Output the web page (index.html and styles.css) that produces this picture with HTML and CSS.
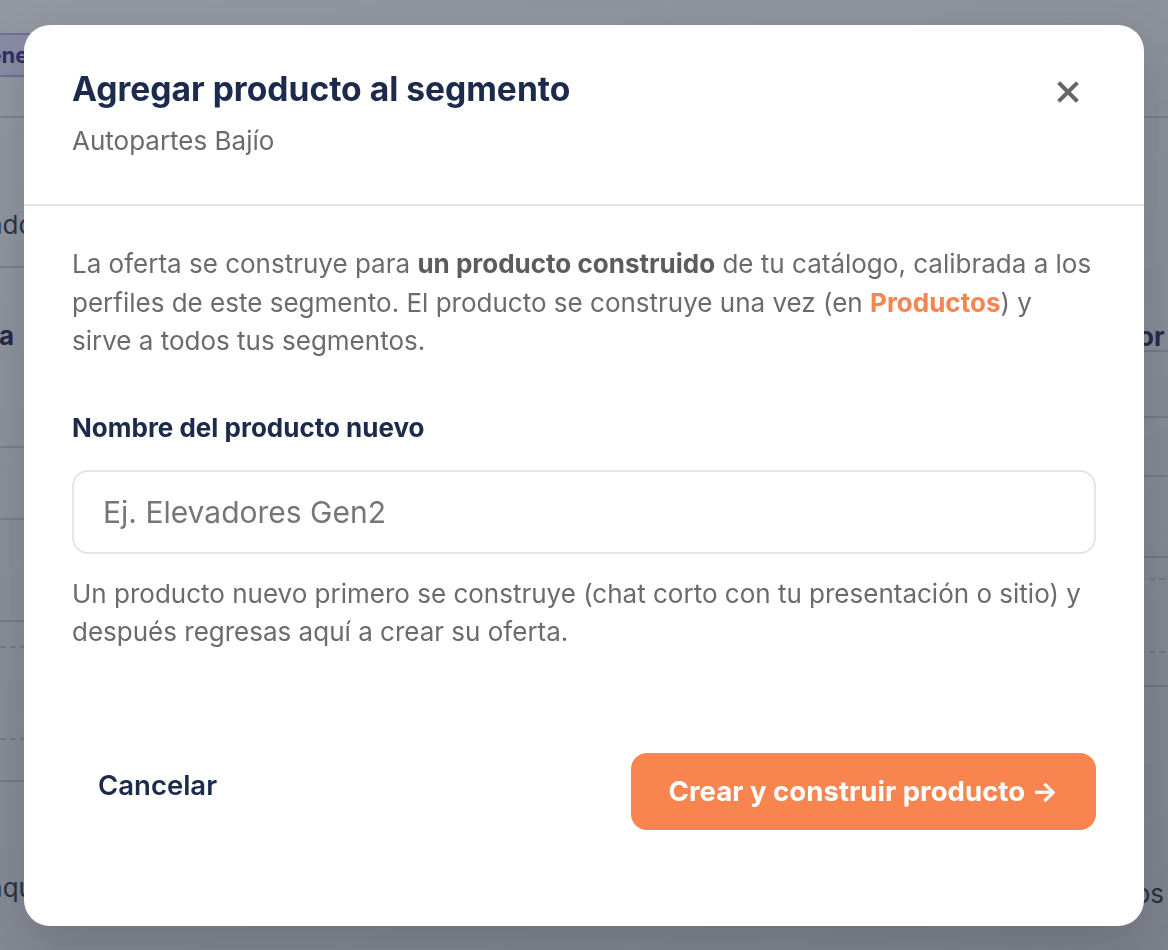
FILE: index.html
```html
<!DOCTYPE html>
<html lang="es">

<head>
    <meta charset="UTF-8">
    <meta name="viewport" content="width=device-width, initial-scale=1.0">
    <title>Agregar producto al segmento</title>
    <link rel="stylesheet" href="styles.css">
</head>

<body>

    <!-- pagina de fondo (queda detras del modal) -->
    <div class="fondo">
        <div class="columna columna-izq">
            <div class="fila alto-93 inicio"><span class="badge">Generado</span></div>
            <div class="fila alto-150 abajo"><span class="txt">Mercado</span></div>
            <div class="fila alto-180 medio"><span class="txt negrita corta">Oferta</span></div>
            <div class="fila alto-72"></div>
            <div class="fila alto-102"></div>
            <div class="fila alto-26 punteada"></div>
            <div class="fila alto-92 punteada"></div>
            <div class="fila alto-42"></div>
            <div class="fila alto-120 sin-borde"><span class="txt">aqu</span></div>
        </div>
        <div class="columna columna-der">
            <div class="fila alto-93"></div>
            <div class="fila alto-234 medio"><span class="txt negrita">Valor</span></div>
            <div class="fila alto-66"></div>
            <div class="fila alto-59"></div>
            <div class="fila alto-81"></div>
            <div class="fila alto-22 punteada"></div>
            <div class="fila alto-73 punteada"></div>
            <div class="fila alto-34"></div>
            <div class="fila alto-230 sin-borde"><span class="txt fin">todos</span></div>
        </div>
    </div>

    <div class="capa">
        <div class="modal">
            <div class="modal-cabeza">
                <div>
                    <h2 class="titulo">Agregar producto al segmento</h2>
                    <p class="subtitulo">Autopartes Bajío</p>
                </div>
                <button class="cerrar" aria-label="Cerrar">
                    <svg width="22" height="22" viewBox="0 0 22 22">
                        <path d="M3 3 L19 19 M19 3 L3 19" stroke="#666666" stroke-width="4" stroke-linecap="square" fill="none"/>
                    </svg>
                </button>
            </div>

            <div class="modal-cuerpo">
                <p class="texto">La oferta se construye para <b>un producto construido</b> de tu catálogo, calibrada a los perfiles de este segmento. El producto se construye una vez (en <span class="enlace">Productos</span>) y sirve a todos tus segmentos.</p>

                <label class="etiqueta" for="inpNombre">Nombre del producto nuevo</label>
                <input id="inpNombre" class="campo" type="text" placeholder="Ej. Elevadores Gen2">

                <p class="ayuda">Un producto nuevo primero se construye (chat corto con tu presentación o sitio) y después regresas aquí a crear su oferta.</p>
            </div>

            <div class="modal-pie">
                <button class="btn-cancelar">Cancelar</button>
                <button class="btn-crear">Crear y construir producto →</button>
            </div>
        </div>
    </div>

</body>

</html>
```

FILE: styles.css
```css
* {
    box-sizing: border-box;
}

body {
    margin: 0;
    font-family: Inter, "Noto Sans", sans-serif;
    background-color: #ffffff;
    overflow: hidden;
}

/* fondo */

.fondo {
    display: flex;
    justify-content: space-between;
    margin-left: -120px;
    margin-right: -140px;
    padding-top: 25px;
}

.columna-izq {
    width: 176px;
}

.columna-der {
    width: 220px;
}

.fila {
    display: flex;
    align-items: center;
    border-bottom: 2px solid #d6d8de;
}

.fila.sin-borde {
    border-bottom: none;
}

.fila.punteada {
    border-bottom: 2px dashed #d6d8de;
}

.fila.abajo {
    align-items: flex-end;
    padding-bottom: 26px;
}

.fila.medio {
    align-items: flex-start;
    padding-top: 52px;
}

.columna-izq .fila {
    justify-content: flex-end;
}

.columna-izq .fila.inicio {
    justify-content: flex-start;
}

.columna-der .fila {
    justify-content: flex-start;
}

.alto-22 { height: 22px; }
.alto-26 { height: 26px; }
.alto-34 { height: 34px; }
.alto-42 { height: 42px; }
.alto-59 { height: 59px; }
.alto-66 { height: 66px; }
.alto-72 { height: 72px; }
.alto-73 { height: 73px; }
.alto-81 { height: 81px; }
.alto-92 { height: 92px; }
.alto-93 { height: 93px; align-items: flex-start; padding-top: 8px; }
.alto-102 { height: 102px; }
.alto-120 { height: 120px; }
.alto-150 { height: 150px; }
.alto-180 { height: 180px; }
.alto-230 { height: 230px; }
.alto-234 { height: 234px; }

.columna-der .alto-234 {
    padding-top: 203px;
}

.columna-der .alto-230 {
    padding-top: 183px;
}

.columna-izq .alto-120 {
    align-items: flex-start;
    padding-top: 90px;
}

.badge {
    font-size: 22px;
    font-weight: 700;
    color: #3b2f8f;
    background-color: #ece9ff;
    border: 2px solid #b9b0f0;
    border-radius: 10px;
    padding: 7px 14px;
    margin-left: 76px;
    white-space: nowrap;
}

.txt {
    font-size: 26px;
    color: #333a44;
    margin-right: 22px;
    white-space: nowrap;
}

.txt.corta {
    margin-right: 42px;
}

.columna-der .txt {
    margin-right: 0;
    margin-left: 10px;
}

.columna-der .txt.fin {
    margin-left: 7px;
}

.txt.negrita {
    font-weight: 700;
    color: #1e2b4d;
}

/* capa oscura + modal */

.capa {
    position: fixed;
    top: 0;
    left: 0;
    right: 0;
    bottom: 0;
    background: linear-gradient(160deg, rgba(38, 48, 70, 0.5), rgba(38, 46, 64, 0.6));
    padding: 25px 24px 24px 24px;
    display: flex;
}

.modal {
    flex: 1;
    background-color: #ffffff;
    border-radius: 26px;
    display: flex;
    flex-direction: column;
    box-shadow: 0 20px 50px rgba(0, 0, 0, 0.15);
}

.modal-cabeza {
    display: flex;
    justify-content: space-between;
    align-items: flex-start;
    padding: 44px 48px 46px 48px;
    border-bottom: 2px solid #e6e5df;
}

.titulo {
    margin: 0;
    font-size: 33.6px;
    line-height: 40px;
    font-weight: 700;
    color: #1c2a4b;
}

.subtitulo {
    margin: 15px 0 0 0;
    font-size: 26px;
    line-height: 34px;
    color: #6b6b6b;
}

.cerrar {
    background: none;
    border: none;
    padding: 0;
    margin-top: 12px;
    margin-right: 17px;
    width: 22px;
    height: 22px;
    cursor: pointer;
}

.modal-cuerpo {
    padding: 39px 48px 0 48px;
}

.texto {
    margin: 0;
    font-size: 26px;
    line-height: 38.5px;
    color: #6b6b6b;
}

.texto b {
    color: #5c5c5c;
    font-weight: 700;
}

.enlace {
    color: #f8844f;
    font-weight: 700;
}

.etiqueta {
    display: block;
    margin-top: 51px;
    font-size: 26px;
    line-height: 32px;
    font-weight: 700;
    color: #1c2a4b;
}

.campo {
    display: block;
    width: 100%;
    height: 84px;
    margin-top: 26px;
    padding: 0 29px;
    border: 2px solid #e6e5df;
    border-radius: 16px;
    font-family: Inter, "Noto Sans", sans-serif;
    font-size: 30px;
    color: #333333;
    outline: none;
}

.campo::placeholder {
    color: #767676;
}

.ayuda {
    margin: 21px 0 0 0;
    font-size: 26px;
    line-height: 38.5px;
    color: #6b6b6b;
}

.modal-pie {
    display: flex;
    justify-content: space-between;
    align-items: flex-start;
    padding: 0 48px;
    margin-top: 101px;
}

.btn-cancelar {
    background: none;
    border: none;
    font-family: Inter, "Noto Sans", sans-serif;
    font-size: 27.5px;
    line-height: 34px;
    font-weight: 600;
    color: #1c2a4b;
    padding: 15px 26px;
    cursor: pointer;
}

.btn-crear {
    height: 77px;
    padding: 0 38px;
    border: none;
    border-radius: 16px;
    background-color: #f8844f;
    color: #ffffff;
    font-family: Inter, "Noto Sans", sans-serif;
    font-size: 27.6px;
    font-weight: 700;
    cursor: pointer;
}
```
